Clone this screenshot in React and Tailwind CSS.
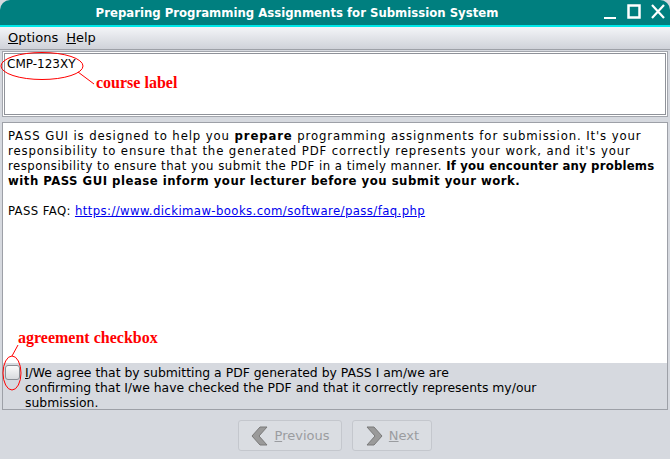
import React from "react";

const sans = { fontFamily: '"DejaVu Sans", "Liberation Sans", sans-serif' };
const cond = { fontFamily: '"DejaVu Sans Condensed", "DejaVu Sans", sans-serif', fontStretch: "condensed" };
const serif = { fontFamily: '"Liberation Serif", "DejaVu Serif", serif' };

function ChevronLeft() {
  return (
    <svg width="18" height="20" viewBox="0 0 18 20">
      <polygon points="9,1 16,1 8,10 16,19 9,19 1,10" fill="#9a9a9a" stroke="#7a7a7a" strokeWidth="1" />
    </svg>
  );
}
function ChevronRight() {
  return (
    <svg width="18" height="20" viewBox="0 0 18 20">
      <polygon points="9,1 2,1 10,10 2,19 9,19 17,10" fill="#9a9a9a" stroke="#7a7a7a" strokeWidth="1" />
    </svg>
  );
}

export default function App() {
  return (
    <div className="w-[670px] h-[459px] bg-[#d6d9df] flex flex-col relative overflow-hidden text-[13px] text-black" style={sans}>
      {/* Title bar */}
      <div className="h-[25px] bg-[#007f7f] rounded-t-[10px] flex items-center relative">
        <div className="flex-1 text-center text-white font-bold text-[13px] pr-[76px]" style={cond}>
          Preparing Programming Assignments for Submission System
        </div>
        <div className="absolute right-[4px] top-[3px] flex items-center gap-[8px]">
          <svg width="16" height="18" viewBox="0 0 16 18"><rect x="2" y="14" width="12" height="2" fill="#fff" /></svg>
          <svg width="16" height="18" viewBox="0 0 16 18"><rect x="2.5" y="2.5" width="11" height="12" fill="none" stroke="#fff" strokeWidth="2.5" /></svg>
          <svg width="16" height="18" viewBox="0 0 16 18"><path d="M2 2 L14 15 M14 2 L2 15" stroke="#fff" strokeWidth="2.2" /></svg>
        </div>
      </div>
      <div className="h-[2px] bg-[#00e8e8]" />
      {/* Menu bar */}
      <div className="h-[23px] bg-gradient-to-b from-[#f4f5f8] to-[#cfd2d9] flex items-center gap-[8px] px-[8px] border-b border-[#9da0a7]">
        <span><span className="underline">O</span>ptions</span>
        <span><span className="underline">H</span>elp</span>
      </div>
      {/* Course label field */}
      <div className="mx-[2px] mt-[1px] h-[66px] border border-[#a3a6ad] bg-white p-px">
        <div className="h-full border border-[#8f9299] px-[2px] pt-[3px] leading-[15px] text-[12px]">CMP-123XY</div>
      </div>
      {/* Main pane */}
      <div className="mx-[2px] mt-[5px] h-[288px] border border-[#9da0a7] flex flex-col">
        <div className="flex-1 bg-white px-[5px] pt-[5px] leading-[15px] text-[13px] tracking-[0.88px] whitespace-nowrap" style={cond}>
          <p>
            PASS GUI is designed to help you <b>prepare</b> programming assignments for submission. It's your
            <br />
            responsibility to ensure that the generated PDF correctly represents your work, and it's your
            <br />
            <span className="tracking-[0.5px]">responsibility to ensure that you submit the PDF in a timely manner. </span>
            <b className="tracking-[0.2px]">If you encounter any problems</b>
            <br />
            <b className="tracking-[0.5px]">with PASS GUI please inform your lecturer before you submit your work.</b>
          </p>
          <p className="mt-[15px] tracking-[0.4px]">
            PASS FAQ: <span className="text-[#0000ee] underline">https://www.dickimaw-books.com/software/pass/faq.php</span>
          </p>
        </div>
        <div className="h-[46px] flex items-start gap-[5px] pl-[2px] pt-[1px]">
          <div className="w-[15px] h-[15px] mt-[1px] rounded-[3px] border border-[#8a8d94] bg-gradient-to-b from-[#fafafa] to-[#d8dade] shrink-0" />
          <div className="leading-[15px] pt-px text-[12.4px] whitespace-nowrap">
            <span className="underline">I</span>/We agree that by submitting a PDF generated by PASS I am/we are
            <br />
            confirming that I/we have checked the PDF and that it correctly represents my/our
            <br />
            submission.
          </div>
        </div>
      </div>
      {/* Buttons */}
      <div className="flex justify-center gap-[10px] mt-[10px]">
        <div className="w-[104px] h-[31px] rounded-[3px] border border-[#c4c7cd] bg-[#dadde2] flex items-center justify-center gap-[6px] text-[#9a9ca0]">
          <ChevronLeft />
          <span><span className="underline">P</span>revious</span>
        </div>
        <div className="w-[80px] h-[31px] rounded-[3px] border border-[#c4c7cd] bg-[#dadde2] flex items-center justify-center gap-[6px] text-[#9a9ca0]">
          <ChevronRight />
          <span><span className="underline">N</span>ext</span>
        </div>
      </div>

      {/* Annotations */}
      <svg className="absolute left-0 top-0 pointer-events-none" width="670" height="459">
        <ellipse cx="42" cy="66" rx="41" ry="13.5" fill="none" stroke="#ff0000" strokeWidth="1" />
        <line x1="78" y1="72" x2="94" y2="84" stroke="#ff0000" strokeWidth="1" />
        <ellipse cx="12" cy="373" rx="9" ry="17" fill="none" stroke="#ff0000" strokeWidth="1" />
        <line x1="12" y1="356" x2="18" y2="345" stroke="#ff0000" strokeWidth="1" />
      </svg>
      <div className="absolute left-[96px] top-[74px] text-[#ff0000] font-bold text-[16px] leading-[18px]" style={serif}>course label</div>
      <div className="absolute left-[18px] top-[329px] text-[#ff0000] font-bold text-[16px] leading-[18px]" style={serif}>agreement checkbox</div>
    </div>
  );
}
